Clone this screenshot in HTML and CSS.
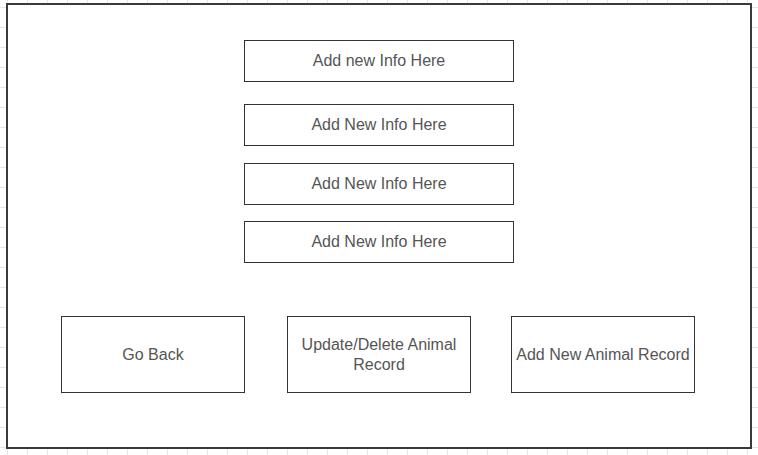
FILE: index.html
```html
<!DOCTYPE html>
<html>
<head>
<meta charset="utf-8">
<link rel="stylesheet" href="styles.css">
</head>
<body>
<div class="frame">
  <div class="field f1">Add new Info Here</div>
  <div class="field f2">Add New Info Here</div>
  <div class="field f3">Add New Info Here</div>
  <div class="field f4">Add New Info Here</div>
  <div class="actions">
    <div class="btn">Go Back</div>
    <div class="btn b2">Update/Delete Animal Record</div>
    <div class="btn b3">Add New Animal Record</div>
  </div>
</div>
</body>
</html>
```
FILE: styles.css
```css
html, body {
  margin: 0;
  padding: 0;
}
body {
  width: 758px;
  height: 455px;
  overflow: hidden;
  background-color: #fff;
  background-image:
    linear-gradient(to right, #e6e6e6 1px, transparent 1px),
    linear-gradient(to bottom, #e6e6e6 1px, transparent 1px);
  background-size: 20px 20px;
  background-position: 7px 7px;
  font-family: "Liberation Sans", Arial, sans-serif;
  font-size: 16px;
  color: #555;
  padding-top: 3px;
  padding-left: 6px;
  box-sizing: border-box;
}
.frame {
  width: 746px;
  height: 446px;
  box-sizing: border-box;
  border: 2px solid #3a3a3a;
  background: #fff;
  display: flex;
  flex-direction: column;
  align-items: center;
}
.field {
  width: 270px;
  height: 42px;
  box-sizing: border-box;
  border: 1px solid #333;
  display: flex;
  align-items: center;
  justify-content: center;
}
.f1 { margin-top: 35px; }
.f2 { margin-top: 22px; }
.f3 { margin-top: 17px; }
.f4 { margin-top: 16px; }
.actions {
  align-self: stretch;
  display: flex;
  margin-top: 53px;
  padding-left: 53px;
}
.btn {
  width: 184px;
  height: 77px;
  box-sizing: border-box;
  border: 1px solid #333;
  display: flex;
  align-items: center;
  justify-content: center;
  text-align: center;
  line-height: 20px;
  padding: 0 6px;
}
.b2 { margin-left: 42px; }
.b3 { margin-left: 40px; padding: 0; }
```
